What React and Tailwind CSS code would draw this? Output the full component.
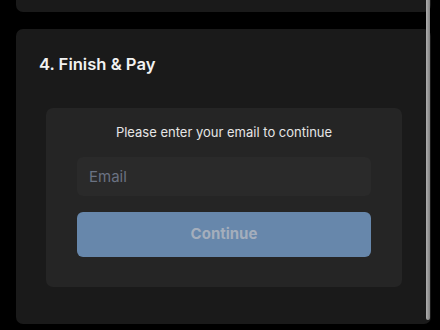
export default function App() {
  return (
    <div
      className="relative w-[440px] h-[330px] overflow-hidden bg-black"
      style={{ fontFamily: "Inter, 'Noto Sans', sans-serif" }}
    >
      <div className="flex flex-col gap-[17px] pl-4 pr-[9px] mt-[-40px]">
        <div className="h-[52px] rounded-b-[7px] bg-[#1a1a1a]" />
        <div className="h-[295px] rounded-[7px] bg-[#1a1a1a] flex flex-col">
          <h2 className="pl-[23px] pt-[23px] text-[16.6px] leading-6 font-semibold text-[#f2f2f2]">
            4. Finish &amp; Pay
          </h2>
          <div className="mx-[30px] mr-[29px] mt-[32px] rounded-[7px] bg-[#252525] px-[31px] pt-[14px] pb-[30px] flex flex-col">
            <p className="text-center text-[13px] leading-5 text-[#e6e6e6]">
              Please enter your email to continue
            </p>
            <div className="mt-[15px] h-[39px] rounded-[6px] bg-[#2a2a2a] flex items-center pl-3 pt-[2px] text-[15px] text-[#6a7282]">
              Email
            </div>
            <button className="mt-[16px] h-[45px] rounded-[6px] bg-[#6787ab] text-[15px] font-bold text-[#a4aebc]">
              Continue
            </button>
          </div>
        </div>
      </div>
      <div className="absolute left-[426px] top-0 w-[4px] h-[320px] rounded-b-full bg-gradient-to-r from-[#b0b0b0] to-[#808080]" />
    </div>
  );
}
